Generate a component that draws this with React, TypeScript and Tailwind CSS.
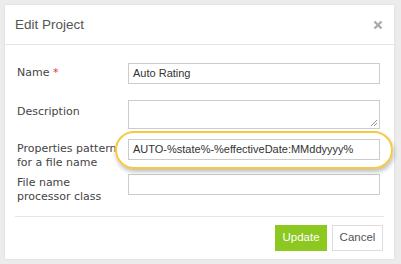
import React from "react";

const labelFont = { fontFamily: '"DejaVu Sans", Verdana, sans-serif' };

export default function App() {
  return (
    <div
      className="w-[401px] h-[264px] bg-[#ececec] pt-[5px] pl-[5px] overflow-hidden"
      style={{ fontFamily: '"Liberation Sans", Arial, sans-serif' }}
    >
      <div className="relative w-[389px] h-[254px] bg-white flex flex-col shadow-[0_0_3px_rgba(0,0,0,0.08)]">
        {/* header */}
        <div className="h-[40px] shrink-0 flex items-center justify-between pl-[10px] pr-[10px] border-b border-[#e5e5e5]">
          <span className="text-[13.5px] text-[#555] leading-none">Edit Project</span>
          <svg width="10" height="10" viewBox="0 0 10 10" className="mr-[1px]">
            <path d="M1.5 1.5 L8.5 8.5 M8.5 1.5 L1.5 8.5" stroke="#aaa" strokeWidth="2.3" strokeLinecap="butt" />
          </svg>
        </div>

        {/* body */}
        <div className="flex flex-col shrink-0 pt-[18px] pl-[12px] text-[#444]">
          <div className="flex items-start h-[21px]">
            <div className="w-[111px] pt-[3px] text-[11px] leading-[14px]" style={labelFont}>
              Name <span className="text-[#e0393e]">*</span>
            </div>
            <div className="w-[252px] h-[21px] border border-[#ccc] flex items-center pl-[4px] text-[11px] text-[#333]">
              Auto Rating
            </div>
          </div>

          <div className="flex items-start h-[29px] mt-[16px]">
            <div className="w-[111px] pt-[5px] text-[11px] leading-[14px]" style={labelFont}>
              Description
            </div>
            <div className="relative w-[252px] h-[29px] border border-[#ccc]">
              <svg width="8" height="8" viewBox="0 0 8 8" className="absolute right-[1px] bottom-[1px]">
                <path d="M7 1 L1 7 M7 4 L4 7" stroke="#888" strokeWidth="0.9" />
              </svg>
            </div>
          </div>

          <div className="flex items-start h-[21px] mt-[10px]">
            <div className="w-[111px] pt-[3px] text-[11px] leading-[14px]" style={labelFont}>
              Properties pattern
              <br />
              for a file name
            </div>
            <div className="w-[252px] h-[21px] border border-[#ccc] flex items-center pl-[4px] text-[11px] text-[#333]">
              AUTO-%state%-%effectiveDate:MMddyyyy%
            </div>
          </div>

          <div className="flex items-start h-[21px] mt-[14px]">
            <div className="w-[111px] pt-[2px] text-[11px] leading-[14px]" style={labelFont}>
              File name
              <br />
              processor class
            </div>
            <div className="w-[252px] h-[21px] border border-[#ccc]" />
          </div>
        </div>

        {/* footer */}
        <div className="mt-[21px] shrink-0 mx-[10px] border-t border-[#e5e5e5] pt-[8px] flex justify-end gap-[5px] pr-[1px]">
          <div className="w-[52px] h-[26px] bg-[#8cc820] text-white text-[11.5px] flex items-center justify-center">
            Update
          </div>
          <div className="w-[51px] h-[26px] bg-white border border-[#ddd] text-[#555] text-[11.5px] flex items-center justify-center">
            Cancel
          </div>
        </div>

        {/* highlight annotation */}
        <div className="absolute left-[110px] top-[126px] w-[278px] h-[38px] rounded-full border-2 border-[#f6c943] shadow-[1px_3px_4px_rgba(0,0,0,0.25)]" />
      </div>
    </div>
  );
}
